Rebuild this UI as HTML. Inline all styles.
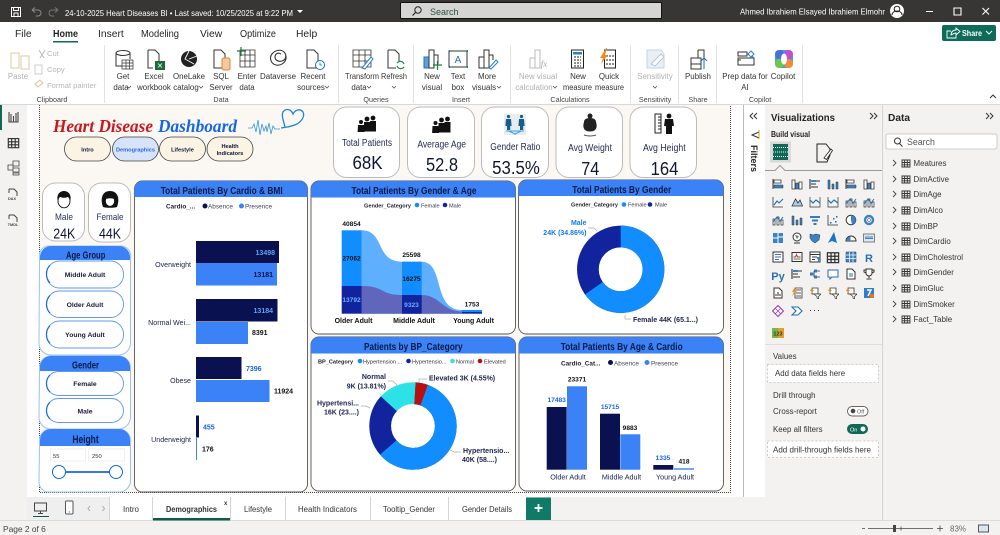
<!DOCTYPE html>
<html><head><meta charset="utf-8"><style>
html,body{margin:0;padding:0;width:1000px;height:535px;overflow:hidden;background:#f3f2f1}
svg{display:block;font-family:"Liberation Sans",sans-serif}
.r{font-size:7.9px;fill:#333;text-anchor:middle}
.d{font-size:7.9px;fill:#b0b0b0;text-anchor:middle}
.g{font-size:7.2px;fill:#444;text-anchor:middle}
.t{font-size:10.3px;fill:#252423}
.h{font-size:10.3px;font-weight:bold;fill:#0a1a45;text-anchor:middle}
.l{font-size:6.4px;fill:#445}
.lb{font-size:6.4px;font-weight:bold;fill:#223}
.a{font-size:7.1px;fill:#1b2350}
.kt{font-size:10px;fill:#252b55;text-anchor:middle}
.kv{font-size:18.5px;fill:#111633;text-anchor:middle}
.s{font-size:6.8px;font-weight:bold;fill:#1a1a3a;text-anchor:middle}
.tb{font-size:8.6px;fill:#333}
.tr{font-size:7.9px;fill:#333}
</style></head><body>
<svg width="1000" height="535" viewBox="0 0 1000 535" xmlns="http://www.w3.org/2000/svg">
<defs>
<symbol id="tbl" viewBox="0 0 10 10"><path d="M1 2h8v7H1zM1 4.500h8M1 6.800h8M3.600 2v7M6.300 2v7" fill="none" stroke="#333" stroke-width=".9"/></symbol>
<symbol id="hb" viewBox="0 0 12 12"><path d="M1 1v10" stroke="#333" fill="none"/><path d="M2 2h7v3H2z" fill="#fff" stroke="#333" stroke-width=".8"/><path d="M2 7h9v3H2z" fill="#3b82c4" stroke="#333" stroke-width=".5"/></symbol>
<symbol id="vb" viewBox="0 0 12 12"><path d="M1 2h3v9H1zM8 4h3v7H8z" fill="#fff" stroke="#333" stroke-width=".8"/><path d="M4.500 5h3v6h-3z" fill="#3b82c4" stroke="#333" stroke-width=".5"/></symbol>
<symbol id="hs" viewBox="0 0 12 12"><path d="M1 1v10M2 3h9M2 6h5M2 9h7" fill="none" stroke="#333" stroke-width="1.100"/><path d="M2 2h5v2H2z" fill="#3b82c4"/></symbol>
<symbol id="vs" viewBox="0 0 12 12"><path d="M1 2v9h2V2zM5 6v5h2V6zM9 4v7h2V4z" fill="#3b82c4" stroke="#333" stroke-width=".5"/></symbol>
<symbol id="ln" viewBox="0 0 12 12"><path d="M1 1v10h10" fill="none" stroke="#333" stroke-width=".8"/><path d="M2 9l3-4 2 2 4-4" fill="none" stroke="#1f6fb5" stroke-width="1.100"/></symbol>
<symbol id="ar" viewBox="0 0 12 12"><path d="M1 10l3.500-7 2.500 4 2-3 2.500 6z" fill="#a9cdee" stroke="#333" stroke-width=".8"/></symbol>
<symbol id="wv" viewBox="0 0 12 12"><path d="M1 1v10h10V1" fill="none" stroke="#333" stroke-width=".7"/><path d="M1 4l3 3 3-3 4 3" fill="none" stroke="#1f6fb5" stroke-width="1.200"/></symbol>
<symbol id="cb" viewBox="0 0 12 12"><path d="M1 5h2v6H1zM5 3h2v8H5zM9 6h2v5H9z" fill="#fff" stroke="#333" stroke-width=".7"/><path d="M1 8l4-5 3 4 3-4" fill="none" stroke="#1f6fb5"/></symbol>
<symbol id="fn" viewBox="0 0 12 12"><path d="M1 2h10v2H1zM3 5.500h6v2H3zM4.500 9h3v2h-3z" fill="#2b7fc4"/></symbol>
<symbol id="sc" viewBox="0 0 12 12"><path d="M1 1v10h10" fill="none" stroke="#333" stroke-width=".8"/><path d="M3 8h1.500v1.500H3zM6 4h1.500v1.500H6zM8 7h1.500v1.500H8zM9 2h1.500v1.500H9z" fill="#1f6fb5"/></symbol>
<symbol id="pi" viewBox="0 0 12 12"><circle cx="6" cy="6" r="4.800" fill="#fff" stroke="#333"/><path d="M6 6V1.200A4.800 4.800 0 0 1 7 10.700z" fill="#3b82c4"/></symbol>
<symbol id="dn" viewBox="0 0 12 12"><circle cx="6" cy="6" r="4" fill="none" stroke="#3b82c4" stroke-width="2.400"/><circle cx="6" cy="6" r="1.500" fill="none" stroke="#333" stroke-width=".5"/></symbol>
<symbol id="tm" viewBox="0 0 12 12"><path d="M1 1h10v10H1z" fill="#3b82c4"/><path d="M6 1v10M6 5h5M1 6h5" stroke="#fff"/></symbol>
<symbol id="gl" viewBox="0 0 12 12"><circle cx="6" cy="5" r="4" fill="#fff" stroke="#333"/><path d="M4 3l4 1-2 3z" fill="#3a9a4a"/><path d="M3 11h6" stroke="#333"/></symbol>
<symbol id="mp" viewBox="0 0 12 12"><path d="M1 2l3 1 3-1 4 1-1 5-4 3-3-2-2-3z" fill="#3b82c4" stroke="#333" stroke-width=".5"/></symbol>
<symbol id="az" viewBox="0 0 12 12"><path d="M7 0L1 11l4-2 5 2z" fill="#1c74c9"/></symbol>
<symbol id="gg" viewBox="0 0 12 12"><path d="M1 9a5 5 0 0 1 10 0z" fill="#fff" stroke="#333"/><path d="M1.500 9a4.500 4.500 0 0 1 4-4.500V9z" fill="#3b82c4"/></symbol>
<symbol id="cd" viewBox="0 0 12 12"><path d="M.5 2h11v8H.5z" fill="#dfe8f2" stroke="#555" stroke-width=".7"/><path d="M2 6.500h8M2 5h8" stroke="#3b82c4" stroke-width="1"/></symbol>
<symbol id="ml" viewBox="0 0 12 12"><path d="M1 1h10v10H1z" fill="#fff" stroke="#333"/><path d="M3 3.500h6M3 6h6M3 8.500h4" stroke="#3b6fa5"/></symbol>
<symbol id="kp" viewBox="0 0 12 12"><path d="M1 1.500h10v9H1z" fill="#f4f4f4" stroke="#333"/><path d="M2.500 6h2l1-2.500 1 2.500h3" stroke="#c33" fill="none"/><path d="M2.500 8h7" stroke="#3a9a4a"/></symbol>
<symbol id="sl" viewBox="0 0 12 12"><path d="M1 1h10v10H1z" fill="#fff" stroke="#333"/><path d="M1 3.500h10M3 6h5M3 8.500h3" stroke="#333"/><path d="M7 6h5l-2 3v3l-1-1V9z" fill="#3b82c4"/></symbol>
<symbol id="mt" viewBox="0 0 12 12"><path d="M1 1h10v10H1z" fill="#3b82c4" stroke="#245" stroke-width=".5"/><path d="M1 4h10M1 7.500h10M4.500 1v10M8 1v10" stroke="#fff" stroke-width=".7"/></symbol>
<symbol id="dc" viewBox="0 0 12 12"><path d="M1 4.500h3v3H1zM5 1.500h3v3H5zM5 7.500h3v3H5z" fill="#2b7fc4"/><path d="M4 6h1M5 3v6M8 3h3M8 9h3" fill="none" stroke="#333" stroke-width=".8"/></symbol>
<symbol id="sp" viewBox="0 0 12 12"><path d="M1 2h10v7H5l-2 2V9H1z" fill="#fff" stroke="#1f6fb5" stroke-width="1"/></symbol>
<symbol id="pg" viewBox="0 0 12 12"><path d="M2 1h5l3 3v7H2z" fill="#fff" stroke="#333"/><path d="M4 6h4M4 8h4" stroke="#1f6fb5"/></symbol>
<symbol id="tp" viewBox="0 0 12 12"><path d="M3 1h6v4a3 3 0 0 1-6 0zM6 8v2M3.500 11h5M3 2H1v2l2 1M9 2h2v2L9 5" fill="#fff" stroke="#333"/></symbol>
<symbol id="pr" viewBox="0 0 12 12"><path d="M2 1h5l3 3v7H2z" fill="#fff" stroke="#333"/><path d="M4 9V7M6 9V5M8 9V7" stroke="#333"/></symbol>
<symbol id="zp" viewBox="0 0 12 12"><path d="M4 1h7v10H4z" fill="#fff" stroke="#333" stroke-width=".8"/><path d="M5 3h5M5 6h5M5 9h5" stroke="#555"/><path d="M4 0L1 5h2L1 9l5-5H4z" fill="#f08c1c"/></symbol>
<symbol id="zf" viewBox="0 0 12 12"><path d="M3 1h6v6H3z" fill="#fff" stroke="#333" stroke-width=".8"/><path d="M3 0L1 4h2L2 7l3-4H3z" fill="#f08c1c"/><path d="M5 7h7L9.500 9.500V12L8 11V9.500z" fill="#fff" stroke="#333" stroke-width=".7"/></symbol>
<symbol id="pw" viewBox="0 0 12 12"><path d="M1 1h10v10H1z" fill="#2d7ec4"/><path d="M4 3h4L5 9" fill="none" stroke="#fff" stroke-width="1.500"/><path d="M7 7h4v4H7z" fill="#e8702a"/></symbol>
<symbol id="ps" viewBox="0 0 12 12"><path d="M6 .500L11.500 6 6 11.500.5 6z" fill="#fff" stroke="#9b3fb5" stroke-width="1.100"/><path d="M3.500 3.500l5 5M8.500 3.500l-5 5" stroke="#9b3fb5" stroke-width=".8"/></symbol>
<symbol id="ch" viewBox="0 0 12 12"><path d="M1 2h6l4 4-4 4H1l4-4z" fill="#fff" stroke="#1f6fb5" stroke-width="1.100"/></symbol>
</defs>

<rect width="1000" height="535" fill="#f3f2f1"/>
<rect width="1000" height="22" fill="#373635"/>
<rect y="22" width="1000" height="83" fill="#fff"/>
<rect y="104" width="1000" height="1" fill="#d8d8d8"/>
<rect x="27" y="105" width="716" height="392" fill="#fff"/>
<rect x="39" y="105" width="692" height="388" fill="#fbf8f3"/>
<path d="M39.500 105V492.500H730.500V105" fill="none" stroke="#444" stroke-width="1" stroke-dasharray="1 1"/>
<rect x="743" y="105" width="1" height="392" fill="#bbb"/>
<rect x="744" y="105" width="21" height="392" fill="#fff"/>
<rect x="882" y="105" width="1" height="415" fill="#d5d5d5"/>
<rect x="0" y="105" width="2" height="25" fill="#0e6a55"/>

<!-- title bar -->
<g fill="none" stroke="#fff" stroke-width="1">
<path d="M11.500 7.500h9v9h-9zM13.500 7.500v3h5v-3M14 16.500v-3.500h4v3.500"/>
<path d="M32 10l3-2.500M32 10l3 2.500M32 10h6a3 3 0 0 1 0 6h-2" stroke="#8a8a8a"/>
<path d="M58 10l-3-2.500M58 10l-3 2.500M58 10h-6a3 3 0 0 0 0 6h2" stroke="#777"/>
</g>
<text x="65" y="16" font-size="8.600" fill="#fff" textLength="228" lengthAdjust="spacingAndGlyphs">24-10-2025 Heart Diseases BI  •  Last saved: 10/25/2025 at 9:22 PM</text>
<path d="M297 10h6l-3 3z" fill="#fff"/>
<rect x="400.500" y="2.500" width="261" height="16" rx="1" fill="#d5d5d2" stroke="#111"/>
<circle cx="418" cy="10" r="3.200" fill="none" stroke="#222"/><path d="M415.500 12.500l-3 3" stroke="#222" stroke-width="1.200"/>
<text x="430" y="15" font-size="9" fill="#2f4f45">Search</text>
<text x="740" y="14.500" font-size="8.200" fill="#fff" textLength="145" lengthAdjust="spacingAndGlyphs">Ahmed Ibrahiem Elsayed Ibrahiem Elmohr</text>
<circle cx="897" cy="11" r="7" fill="#fff"/><circle cx="897" cy="9" r="2.800" fill="none" stroke="#222"/><path d="M892 15a5 4 0 0 1 10 0" fill="none" stroke="#222"/>
<path d="M926 11.500h7M954 8h7v7h-7zM982.500 8l6.500 6.500M989 8l-6.500 6.500" fill="none" stroke="#fff" stroke-width="1.100"/>

<!-- tabs -->
<text x="15" y="37" class="t">File</text>
<text x="53" y="37" class="t" font-weight="bold" textLength="25" lengthAdjust="spacingAndGlyphs">Home</text>
<rect x="53" y="41" width="25" height="1.500" fill="#0e6a55"/>
<text x="98" y="37" class="t">Insert</text>
<text x="141" y="37" class="t" textLength="38" lengthAdjust="spacingAndGlyphs">Modeling</text>
<text x="200" y="37" class="t">View</text>
<text x="240" y="37" class="t" textLength="36" lengthAdjust="spacingAndGlyphs">Optimize</text>
<text x="296" y="37" class="t">Help</text>
<rect x="942" y="25" width="54" height="16" rx="2" fill="#0e6b58"/>
<path d="M951 31h-4v7h9v-3M951 35c0-3 2-5 5-5v-2l4 3.500-4 3.500v-2c-2 0-3 1-5 2z" fill="none" stroke="#fff" stroke-width=".9"/>
<text x="962" y="36" font-size="8.400" fill="#fff" font-weight="bold" textLength="20" lengthAdjust="spacingAndGlyphs">Share</text>
<path d="M986 31l3 3 3-3" fill="none" stroke="#fff"/>

<path d="M104.500 45v58M338.500 45v58M413.500 45v58M510.500 45v58M630.500 45v58M678.500 45v58M716.500 45v58M802.500 45v58" stroke="#e1e1e1"/>
<g>
<text x="18" y="79" class="d">Paste</text>
<text x="47" y="56" font-size="7.600" fill="#b8b8b8">Cut</text>
<text x="47" y="72" font-size="7.600" fill="#b8b8b8">Copy</text>
<text x="47" y="88" font-size="7.600" fill="#b8b8b8">Format painter</text>
<text x="123" y="79" class="r">Get</text><text x="121" y="90" class="r">data</text>
<text x="154" y="79" class="r">Excel</text><text x="154" y="90" class="r">workbook</text>
<text x="189" y="79" class="r">OneLake</text><text x="186" y="90" class="r">catalog</text>
<text x="221" y="79" class="r">SQL</text><text x="221" y="90" class="r">Server</text>
<text x="247" y="79" class="r">Enter</text><text x="247" y="90" class="r">data</text>
<text x="278" y="79" class="r">Dataverse</text>
<text x="313" y="79" class="r">Recent</text><text x="311" y="90" class="r">sources</text>
<text x="362" y="79" class="r" textLength="34" lengthAdjust="spacingAndGlyphs">Transform</text><text x="359" y="90" class="r">data</text>
<text x="394" y="79" class="r" textLength="26" lengthAdjust="spacingAndGlyphs">Refresh</text>
<text x="432" y="79" class="r">New</text><text x="432" y="90" class="r">visual</text>
<text x="458" y="79" class="r">Text</text><text x="458" y="90" class="r">box</text>
<text x="487" y="79" class="r">More</text><text x="484" y="90" class="r">visuals</text>
<text x="538" y="79" class="d">New visual</text><text x="534" y="90" class="d">calculation</text>
<text x="578" y="79" class="r">New</text><text x="577.500" y="90" class="r" textLength="29" lengthAdjust="spacingAndGlyphs">measure</text>
<text x="609" y="79" class="r">Quick</text><text x="609.500" y="90" class="r" textLength="29" lengthAdjust="spacingAndGlyphs">measure</text>
<text x="655" y="79" class="d">Sensitivity</text>
<text x="698" y="79" class="r">Publish</text>
<text x="745" y="79" class="r">Prep data for</text><text x="745" y="90" class="r">AI</text>
<text x="783" y="79" class="r">Copilot</text>
<text x="52" y="102" class="g">Clipboard</text><text x="221" y="102" class="g">Data</text><text x="376" y="102" class="g">Queries</text><text x="461" y="102" class="g">Insert</text><text x="570" y="102" class="g">Calculations</text><text x="655" y="102" class="g">Sensitivity</text><text x="698" y="102" class="g">Share</text><text x="760" y="102" class="g">Copilot</text>
<path d="M127 86l2 2 2-2M199 86l2 2 2-2M325 86l2 2 2-2M367 86l2 2 2-2M392 86l2 2 2-2M497 86l2 2 2-2M553 86l2 2 2-2M653 86l2 2 2-2" fill="none" stroke="#555" stroke-width=".8"/>
</g>
<g fill="none" stroke="#333" stroke-width="1">
<path d="M11 53h8v15H11zM21 56h8v13h-8z" stroke="#e0c9a0"/><path d="M39 50l3 5 3-5M42 55l-2 3M42 55l2 3" stroke="#bbb"/><path d="M35 65h7v9h-7z" stroke="#ccc"/><path d="M35 84l5-4 3 3-5 4z" stroke="#d8c59a"/>
<ellipse cx="123" cy="53" rx="7" ry="2.500"/><path d="M116 53v13h6M130 53v6"/><path d="M122 60h11v9h-11zM122 63h11M122 66h11M126 60v9M129.500 60v9" stroke-width=".7"/>
<path d="M148 50h7l4 4v8M148 50v18h5"/><rect x="155" y="61" width="10" height="9" fill="#1d6b3a" stroke="none"/><path d="M158 63.500l4 4M162 63.500l-4 4" stroke="#fff" stroke-width=".8"/>
<circle cx="189" cy="59" r="8" fill="#222" stroke="none"/><path d="M189 51l-4 8 9 5M189 59l8-3" stroke="#fff" stroke-width=".9"/>
<path d="M214 50h7l4 4v14h-11z"/><rect x="222" y="58" width="8" height="12" rx="2" fill="#f7c9a0" stroke="#d8843a"/>
<path d="M240 50h15v17h-15zM240 55h15M240 61h15M245 50v17M250 50v17" stroke-width=".8"/><path d="M241 47v9M237 51h9" stroke="#1d7a3a" stroke-width="1.200"/>
<path d="M286 56c1 6-5 10-10 9s-7-7-4-11 9-5 12-2 2 8-2 9-7-1-7-4 3-5 6-3" stroke-width="1.100"/>
<path d="M307 50h7l4 4v14h-11z"/><circle cx="320" cy="65" r="4.500" fill="#fff" stroke="#1f6fb5"/><path d="M320 62.500V65h2" stroke="#1f6fb5" stroke-width=".8"/>
<path d="M353 50h18v17h-18zM353 55h18M353 61h18M359 50v17M365 50v17" stroke-width=".8"/><path d="M362 68l9-11 2 2-8 10z" fill="#fff" stroke="#2b7fc4"/>
<path d="M388 50h7l4 4v8M388 50v18h8"/><path d="M397 63a4 4 0 0 1 7 1M404 67a4 4 0 0 1-7-1" stroke="#2b8a4a" stroke-width="1.200"/>
<path d="M424 57h5v11h-5z" fill="#5aa0de" stroke="#2b6fb0"/><path d="M429 50h5v18h-5zM434 55h4v9"/><path d="M433 65h9M437.500 61v9" stroke="#1d7a3a" stroke-width="1.200"/>
<path d="M449 51h18v16h-18z" stroke="#333"/><path d="M449 51h1M467 51h1M449 67h1M467 67h1" stroke="#1f6fb5" stroke-width="2"/><text x="458" y="63" font-size="10" fill="#2b6fb0" stroke="none" text-anchor="middle">A</text>
<path d="M479 57h5v11h-5zM484 50h5v18h-5zM489 55h4v5"/><path d="M489 68l7-8 2 2-7 7z" fill="#fff" stroke="#2b7fc4"/>
<path d="M530 58h5v10h-5zM535 50h5v18h-5z" stroke="#bbb"/><text x="544" y="67" font-size="9" font-family="Liberation Serif" font-style="italic" fill="#aaa" stroke="none" text-anchor="middle">fx</text>
<rect x="571.500" y="50" width="12" height="18" stroke="#222"/><rect x="573" y="52" width="9" height="2.500" fill="#2b7fc4" stroke="none"/><path d="M574 57h2M577 57h2M580 57h1M574 60h2M577 60h2M580 60h1M574 63h2M577 63h2M580 63h1M574 66h2M577 66h2M580 66h1" stroke="#222"/>
<rect x="604.500" y="50" width="11" height="18" stroke="#222"/><path d="M606 56h2M609 56h2M612 56h2M606 60h2M609 60h2M612 60h2M606 64h2M609 64h2M612 64h2" stroke="#222"/><path d="M606 48l-6 10h3l-2 6 7-9h-3l2-7z" fill="#f08c1c" stroke="none"/>
<path d="M647 50h14l3 4v14h-17z" fill="#e8f0f6" stroke="#c5d6e2"/><path d="M651 64l10-10 3 3-9 9z" fill="#fff" stroke="#b5c8d8"/>
<path d="M698 50h6v12M698 50v8M691 58h10v11h-10zM691 64h10"/><path d="M704 69V58M701 61l3-3 3 3" stroke="#1f6fb5"/>
<path d="M738 58h16v7h-16zM738 60h3"/><path d="M738 52h9v4h-9z"/><path d="M751 51l3 3-3 3-3-3zM752 56l2 2" stroke="#2b7fc4"/>
</g>
<rect x="775" y="50" width="18" height="18" rx="6" fill="#2fa5d8"/><rect x="775" y="50" width="9" height="9" rx="4" fill="#4c6fe0"/><rect x="784" y="50" width="9" height="9" rx="4" fill="#c24fd0"/><rect x="775" y="59" width="9" height="9" rx="4" fill="#6fc84a"/><rect x="784" y="59" width="9" height="9" rx="4" fill="#f08c3c"/><ellipse cx="784" cy="59" rx="3" ry="5.500" fill="#fff"/>
<path d="M990 98l3-3 3 3" fill="none" stroke="#333"/>
<g fill="none" stroke="#444">
<path d="M9 112v10h9v-10M11 122v-8M13.500 122v-6M16 122v-9" stroke-width="1.100"/>
<use href="#tbl" x="7" y="136" width="13" height="13"/>
<path d="M8 165h5v5H8zM13 161h6v5h-6zM13 168h6v4h-6zM13 173h6v2h-6z" stroke-width=".8"/>
<path d="M9 189h5l3 3v4M9 189v4"/><path d="M9 215h5l3 3v4M9 215v4"/>
</g>
<text x="12" y="200" font-size="3.800" font-weight="bold" fill="#444" text-anchor="middle">DAX</text>
<text x="13" y="226" font-size="3.800" font-weight="bold" fill="#444" text-anchor="middle">TMDL</text>

<!-- dashboard title -->
<text x="53" y="132" font-family="Liberation Serif" font-weight="bold" font-style="italic" font-size="17.500" fill="#c8171e" textLength="100" lengthAdjust="spacingAndGlyphs">Heart Disease</text>
<text x="158" y="132" font-family="Liberation Serif" font-weight="bold" font-style="italic" font-size="17.500" fill="#1666e8" textLength="79" lengthAdjust="spacingAndGlyphs">Dashboard</text>
<path d="M248 128h4l2-4 2 8 2-12 2 15 2-11 2 7 2-5 1 6 2-9 2 11 2-8 2 3h5" fill="none" stroke="#3596d8" stroke-width=".8"/>
<path d="M285 128C284 121 281 116 283 112C286 108 291 109 293 114C295 110 300 108 303 112C305 116 302 121 297 124C293 126 289 127 281 128" fill="none" stroke="#1c86d8" stroke-width="1.300"/>
<g stroke="#444" stroke-width=".8" fill="#fbf3e4">
<rect x="64.500" y="137" width="46" height="24" rx="12"/>
<rect x="112.500" y="137" width="46" height="24" rx="12" fill="#d6e3f8"/>
<rect x="159.500" y="137" width="46" height="24" rx="12"/>
<rect x="207" y="137" width="46" height="24" rx="12"/>
</g>
<g font-size="5.600" font-weight="bold" fill="#11163a" text-anchor="middle">
<text x="87.500" y="151.500">Intro</text><text x="135.500" y="151.500" fill="#2a66e0" textLength="39" lengthAdjust="spacingAndGlyphs">Demographics</text><text x="182.500" y="151.500">Lifestyle</text><text x="230" y="148">Health</text><text x="230" y="155">Indicators</text>
</g>

<!-- KPI cards -->
<g fill="#fff" stroke="#bbb">
<rect x="333.500" y="107" width="66" height="70.500" rx="13"/><rect x="407.500" y="107" width="67" height="70.500" rx="13"/><rect x="481.500" y="107" width="67" height="70.500" rx="13"/><rect x="556" y="107" width="66.500" height="70.500" rx="13"/><rect x="630" y="107" width="66.500" height="70.500" rx="13"/>
<rect x="42.500" y="183" width="42" height="58" rx="13"/><rect x="88.500" y="183" width="42" height="59" rx="13"/>
</g>
<g fill="#111">
<g id="fam"><circle cx="361" cy="122" r="2"/><circle cx="367" cy="119" r="2.400"/><circle cx="373" cy="118" r="2.400"/><path d="M358 125h6l.6 7h-7zM364 122h6v9.500h-6zM370 121h6v10.500h-6z"/></g>
<use href="#fam" x="74.500" y="1"/>
</g>
<rect x="504" y="114" width="22" height="21" fill="#e9ecef"/>
<g fill="#155e8c"><circle cx="508.500" cy="116.500" r="1.600"/><circle cx="521.500" cy="116.500" r="1.600"/><path d="M506 119h5l.6 7h-1.400v4h-3.200v-4h-1.600zM519 119h5l.6 7h-1.400v4h-3.200v-4h-1.600z"/></g>
<path d="M506 131h18M509 131l6 3 6-3M515 134v1" stroke="#3aa0dc" fill="none"/>
<circle cx="590" cy="116" r="2.500" fill="#222"/><path d="M584 122c0-3 3-4 6-4s6 1 6 4c1 3 1 6-1 8-2 2-8 2-10 0-2-2-2-5-1-8z" fill="#222"/><path d="M584 135q6 2 12 0" stroke="#555" fill="none"/>
<path d="M655 114h6v19h-6zM658 117h3M658 120h3M658 123h3M658 126h3M658 129h3" fill="none" stroke="#222"/><circle cx="669" cy="116" r="2.400" fill="#111"/><path d="M665 119h8l1 7h-2v8h-6v-8h-2z" fill="#111"/>
<text x="367" y="146" class="kt" textLength="50" lengthAdjust="spacingAndGlyphs">Total Patients</text><text x="367.500" y="169" class="kv" textLength="30" lengthAdjust="spacingAndGlyphs">68K</text>
<text x="441.700" y="147.500" class="kt" textLength="48.700" lengthAdjust="spacingAndGlyphs">Average Age</text><text x="442" y="171" class="kv" textLength="32" lengthAdjust="spacingAndGlyphs">52.8</text>
<text x="515.300" y="150" class="kt" textLength="50" lengthAdjust="spacingAndGlyphs">Gender Ratio</text><text x="516" y="174" class="kv" textLength="47.700" lengthAdjust="spacingAndGlyphs">53.5%</text>
<text x="590" y="151" class="kt" textLength="44" lengthAdjust="spacingAndGlyphs">Avg Weight</text><text x="590.300" y="175" class="kv" textLength="18" lengthAdjust="spacingAndGlyphs">74</text>
<text x="664.300" y="151" class="kt" textLength="42.700" lengthAdjust="spacingAndGlyphs">Avg Height</text><text x="664.500" y="175" class="kv" textLength="27.700" lengthAdjust="spacingAndGlyphs">164</text>

<!-- male/female -->
<ellipse cx="64" cy="201" rx="6" ry="6.800" fill="#fff" stroke="#111" stroke-width=".9"/><path d="M57.500 200c-2-12 15-12 13 0-1-2-2-3-3-3-2 1-5 1-7 0-1 0-2 1-3 3z" fill="#111"/>
<path d="M103 207c-3-8-1-16 7-16s10 8 7 16c-3 1-11 1-14 0z" fill="#111"/><ellipse cx="110" cy="201" rx="4.200" ry="5" fill="#fff"/><path d="M105.500 199c1-4 8-4 9 0-3-1-6-1-9 0z" fill="#111"/>
<text x="64" y="220" font-size="9.500" fill="#2a2f5f" text-anchor="middle" textLength="18" lengthAdjust="spacingAndGlyphs">Male</text><text x="64.300" y="238.500" font-size="14.500" fill="#111633" text-anchor="middle" textLength="22" lengthAdjust="spacingAndGlyphs">24K</text>
<text x="110" y="220" font-size="9.500" fill="#2a2f5f" text-anchor="middle" textLength="27" lengthAdjust="spacingAndGlyphs">Female</text><text x="110" y="238.500" font-size="14.500" fill="#111633" text-anchor="middle" textLength="22" lengthAdjust="spacingAndGlyphs">44K</text>

<!-- slicers -->
<g fill="#fff" stroke="#9cc0f6">
<path d="M39.500 258a10 10 0 0 1 8-12h74a10 10 0 0 1 9 12v85a12 12 0 0 1-12 12H51a12 12 0 0 1-12-12z"/>
<path d="M39.500 369a12 12 0 0 1 10-13h70a12 12 0 0 1 11 13v48a12 12 0 0 1-12 12H51a12 12 0 0 1-12-12z"/>
<path d="M39.500 443a12 12 0 0 1 10-14h70a12 12 0 0 1 11 14v39a12 12 0 0 1-10 10H49a10 10 0 0 1-10-10z"/>
</g>
<path d="M40 260v-3a11 11 0 0 1 11-11h68a11 11 0 0 1 11 11v3z" fill="#3b82f6"/>
<path d="M40 371v-4a11 11 0 0 1 11-11h68a11 11 0 0 1 11 11v4z" fill="#3b82f6"/>
<path d="M40 446v-6a11 11 0 0 1 11-11h68a11 11 0 0 1 11 11v6z" fill="#3b82f6"/>
<text x="85.700" y="258.500" class="h" textLength="39.300" lengthAdjust="spacingAndGlyphs">Age Group</text><text x="85.500" y="368.500" class="h" textLength="27" lengthAdjust="spacingAndGlyphs">Gender</text><text x="85.500" y="443" font-size="11" font-weight="bold" fill="#0a1a45" text-anchor="middle" textLength="26.300" lengthAdjust="spacingAndGlyphs">Height</text>
<g fill="#fff" stroke="#5f97f5" stroke-width=".9">
<rect x="46.500" y="261" width="77" height="27" rx="13"/><rect x="46.500" y="291" width="77" height="26.500" rx="13"/><rect x="46.500" y="321" width="77" height="27" rx="13"/><rect x="46.500" y="371.500" width="77" height="24" rx="12"/><rect x="46.500" y="398.500" width="77" height="24" rx="12"/>
</g>
<path d="M50 265.100A13 13 0 0 0 50 282.900M50 295.400A13 13 0 0 0 50 313.100M50 325.600A13 13 0 0 0 50 343.400M50 375A12 12 0 0 0 50 392M50 402A12 12 0 0 0 50 419" fill="none" stroke="#1666e8" stroke-width="1.200"/>
<text x="85" y="277" class="s">Middle Adult</text><text x="85" y="307" class="s">Older Adult</text><text x="85" y="337" class="s">Young Adult</text><text x="85" y="386" class="s">Female</text><text x="85" y="413.500" class="s">Male</text>
<rect x="50.500" y="449" width="35" height="12" fill="#fff" stroke="#eee"/><rect x="88.500" y="449" width="36" height="12" fill="#fff" stroke="#eee"/>
<text x="53" y="458" font-size="5.800" fill="#333">55</text><text x="92" y="458" font-size="5.800" fill="#333">250</text>
<path d="M65 472h45" stroke="#1666e8" stroke-width="1.800"/>
<circle cx="59" cy="472" r="6.500" fill="#fff" stroke="#1666e8"/><circle cx="116" cy="472" r="6.500" fill="#fff" stroke="#1666e8"/>

<!-- chart cards -->
<g fill="#fff" stroke="#555" stroke-width=".9">
<rect x="134.500" y="181" width="173" height="311" rx="8"/>
<rect x="311" y="181" width="204.500" height="153" rx="8"/>
<rect x="518.500" y="180" width="205" height="154" rx="8"/>
<rect x="311" y="337" width="204.500" height="154" rx="8"/>
<rect x="519" y="337" width="204.500" height="154" rx="8"/>
</g>
<g fill="#3b82f6">
<path d="M134.500 197v-8a8 8 0 0 1 8-8h157a8 8 0 0 1 8 8v8z"/>
<path d="M311 197.500V189a8 8 0 0 1 8-8h188.500a8 8 0 0 1 8 8v8.500z"/>
<path d="M518.500 196v-8a8 8 0 0 1 8-8h189a8 8 0 0 1 8 8v8z"/>
<path d="M311 353.500V345a8 8 0 0 1 8-8h188.500a8 8 0 0 1 8 8v8.500z"/>
<path d="M519 353.500V345a8 8 0 0 1 8-8h188.500a8 8 0 0 1 8 8v8.500z"/>
</g>
<text x="221.700" y="194" class="h" textLength="122" lengthAdjust="spacingAndGlyphs">Total Patients By Cardio &amp; BMI</text>
<text x="414" y="194" class="h" textLength="125" lengthAdjust="spacingAndGlyphs">Total Patients By Gender &amp; Age</text>
<text x="621.800" y="193" class="h" textLength="99" lengthAdjust="spacingAndGlyphs">Total Patients By Gender</text>
<text x="413.300" y="350" class="h" textLength="98.700" lengthAdjust="spacingAndGlyphs">Patients by BP_Category</text>
<text x="621.700" y="350" class="h" textLength="122" lengthAdjust="spacingAndGlyphs">Total Patients By Age &amp; Cardio</text>

<!-- chart 1 -->
<text x="166" y="208.500" class="lb">Cardio_...</text><circle cx="205" cy="206" r="2.500" fill="#0a1150"/><text x="208" y="208.500" class="l">Absence</text><circle cx="241.500" cy="206" r="2.500" fill="#3b82f6"/><text x="245" y="208.500" class="l">Presence</text>
<g fill="#0a1150"><rect x="196" y="241" width="83" height="22"/><rect x="196" y="299" width="81.500" height="22.500"/><rect x="196" y="357" width="45.500" height="22"/><rect x="196" y="415.500" width="3" height="22"/></g>
<g fill="#3b82f6"><rect x="196" y="263" width="81" height="22.500"/><rect x="196" y="322" width="52" height="22"/><rect x="196" y="380" width="73.500" height="22"/><rect x="196" y="438" width="1" height="22"/></g>
<g text-anchor="end"><text x="191" y="267" class="a">Overweight</text><text x="191" y="325" class="a">Normal Wei...</text><text x="191" y="383" class="a">Obese</text><text x="191" y="442" class="a">Underweight</text></g>
<g font-size="7" font-weight="bold">
<text x="275" y="255" fill="#62a0f8" text-anchor="end">13498</text><text x="273" y="277" fill="#0a1150" text-anchor="end">13181</text><text x="273" y="313" fill="#62a0f8" text-anchor="end">13184</text><text x="252" y="335" fill="#111">8391</text><text x="246" y="371" fill="#1666e8">7396</text><text x="274" y="393.500" fill="#111">11924</text><text x="203" y="429.500" fill="#1666e8">455</text><text x="202" y="451.500" fill="#111">176</text>
</g>

<!-- chart 2 ribbon -->
<text x="364" y="207.500" font-size="5.600" font-weight="bold" fill="#223">Gender_Category</text><circle cx="417" cy="205" r="2.300" fill="#118dff"/><text x="421" y="207.500" font-size="5.600" fill="#334">Female</text><circle cx="445" cy="205" r="2.300" fill="#12239e"/><text x="449" y="207.500" font-size="5.600" fill="#334">Male</text>
<path d="M361.700 230.300C385 230.300 375 261.700 402 261.700H421.700C445 261.700 432 310 462 310V313.700H361.700z" fill="#5eb0ff"/>
<path d="M361.700 286C385 286 380 295 402 295H421.700C440 295 442 311.500 462 311.500V313.700H361.700z" fill="#5f66bb"/>
<rect x="341.700" y="230.300" width="20" height="55.700" fill="#118dff"/><rect x="341.700" y="286" width="20" height="27.700" fill="#12239e"/>
<rect x="402" y="261.700" width="19.700" height="33.300" fill="#118dff"/><rect x="402" y="295" width="19.700" height="18.700" fill="#12239e"/>
<rect x="462" y="310" width="20" height="2" fill="#118dff"/><rect x="462" y="312" width="20" height="1.700" fill="#12239e"/>
<g font-size="6.600" font-weight="bold" text-anchor="middle"><text x="351.500" y="226" fill="#111">40854</text><text x="351.500" y="260.500" fill="#111">27062</text><text x="351.500" y="302" fill="#6ab0ff">13792</text><text x="411.500" y="257" fill="#111">25598</text><text x="411.500" y="281" fill="#111">16275</text><text x="411.500" y="307" fill="#6ab0ff">9323</text><text x="472" y="306.500" fill="#111">1753</text></g>
<g font-size="7" font-weight="bold" fill="#111" text-anchor="middle"><text x="353.500" y="323">Older Adult</text><text x="414" y="323">Middle Adult</text><text x="473.500" y="323">Young Adult</text></g>

<!-- chart 3 donut -->
<text x="571" y="206.500" font-size="5.600" font-weight="bold" fill="#223">Gender_Category</text><circle cx="624" cy="204.500" r="2.300" fill="#118dff"/><text x="628" y="206.500" font-size="5.600" fill="#334">Female</text><circle cx="650" cy="204.500" r="2.300" fill="#12239e"/><text x="655" y="206.500" font-size="5.600" fill="#334">Male</text>
<g transform="rotate(-90 620.700 269.300)" fill="none" stroke-width="21.700">
<circle cx="620.700" cy="269.300" r="32.800" stroke="#12239e"/>
<circle cx="620.700" cy="269.300" r="32.800" stroke="#118dff" stroke-dasharray="134.200 206.100"/>
</g>
<text x="586.500" y="225" font-size="7" font-weight="bold" fill="#1678f0" text-anchor="end">Male</text><text x="586.500" y="235" font-size="7" font-weight="bold" fill="#1678f0" text-anchor="end">24K (34.86%)</text>
<path d="M588 228h6l3 3M625 315v4h6" fill="none" stroke="#aaa" stroke-width=".7"/>
<text x="633" y="322" font-size="7" font-weight="bold" fill="#1b2350">Female 44K (65.1...)</text>

<!-- chart 4 donut -->
<g font-size="5.600"><text x="318" y="363.500" font-weight="bold" fill="#223">BP_Category</text><circle cx="360" cy="361" r="2.300" fill="#118dff"/><text x="363" y="363.500" fill="#334">Hypertension ...</text><circle cx="408.500" cy="361" r="2.300" fill="#12239e"/><text x="412" y="363.500" fill="#334">Hypertensio...</text><circle cx="452.500" cy="361" r="2.300" fill="#2de2e6"/><text x="456" y="363.500" fill="#334">Normal</text><circle cx="480" cy="361" r="2.300" fill="#b80f0f"/><text x="484" y="363.500" fill="#334">Elevated</text></g>
<g transform="rotate(-86.500 413 426)" fill="none" stroke-width="21.700">
<circle cx="413" cy="426" r="32.800" stroke="#2de2e6"/>
<circle cx="413" cy="426" r="32.800" stroke="#12239e" stroke-dasharray="176.700 206.100"/>
<circle cx="413" cy="426" r="32.800" stroke="#118dff" stroke-dasharray="128.900 206.100"/>
<circle cx="413" cy="426" r="32.800" stroke="#b80f0f" stroke-dasharray="9.400 206.100"/>
</g>
<g font-size="7" font-weight="bold" fill="#1b2350">
<text x="386" y="379" text-anchor="end">Normal</text><text x="386" y="388.500" text-anchor="end">9K (13.81%)</text>
<text x="429" y="380.500">Elevated 3K (4.55%)</text>
<text x="359" y="405.500" text-anchor="end">Hypertensi...</text><text x="359" y="414.500" text-anchor="end">16K (23....)</text>
<text x="463" y="453">Hypertensio...</text><text x="462" y="462">40K (58....)</text>
</g>
<path d="M388 381h5l4 4M361 406h5l4 2M419 383v-4h8M450 450l4 2h7" fill="none" stroke="#aaa" stroke-width=".7"/>

<!-- chart 5 -->
<text x="561" y="365.500" font-size="6.400" font-weight="bold" fill="#223">Cardio_Cat...</text><circle cx="610.500" cy="362.500" r="2.500" fill="#0a1150"/><text x="614" y="365.500" class="l">Absence</text><circle cx="647" cy="362.500" r="2.500" fill="#3b82f6"/><text x="651" y="365.500" class="l">Presence</text>
<g fill="#0a1150"><rect x="546.700" y="407" width="20" height="62.700"/><rect x="600" y="413.700" width="20" height="56"/><rect x="653.300" y="465" width="20" height="4.700"/></g>
<g fill="#3b82f6"><rect x="567" y="386.300" width="20" height="83.400"/><rect x="620.300" y="434.300" width="20" height="35.400"/><rect x="674" y="468.300" width="20" height="1.400"/></g>
<g font-size="6.600" font-weight="bold" text-anchor="middle"><text x="556.700" y="402" fill="#1666e8">17483</text><text x="577" y="381.500" fill="#111">23371</text><text x="610" y="409" fill="#1666e8">15715</text><text x="630" y="430" fill="#111">9883</text><text x="663" y="460" fill="#1666e8">1335</text><text x="684" y="463.500" fill="#111">418</text></g>
<g font-size="7.200" fill="#1b2350" text-anchor="middle"><text x="568" y="479.500">Older Adult</text><text x="621.500" y="479.500">Middle Adult</text><text x="675" y="479.500">Young Adult</text></g>

<!-- tabs bar -->
<rect x="27" y="497" width="83" height="23" fill="#efefef"/>
<rect x="110" y="497" width="416" height="23" fill="#fff"/>
<rect x="551" y="497" width="331" height="23" fill="#f3f2f1"/>
<rect x="0" y="520" width="1000" height="1" fill="#dcdcdc"/>
<path d="M109.500 497v23M152.500 497v23M230.500 497v23M285.500 497v23M370.500 497v23M448.500 497v23" stroke="#d5d5d5"/>
<rect x="153" y="518" width="77" height="2.500" fill="#0e5c48"/>
<path d="M34.500 503h12v8h-12zM38 513.500h5M40.500 511v2" fill="none" stroke="#444"/><rect x="33" y="516" width="16" height="1" fill="#0e5c48"/>
<rect x="65.500" y="501" width="7.500" height="13" rx="1" fill="#fff" stroke="#555"/><circle cx="69.300" cy="512" r=".6" fill="#1666e8"/>
<path d="M90 506l-2 2.500 2 2.500M102.500 506l2 2.500-2 2.500" fill="none" stroke="#aaa"/>
<text x="123" y="512" class="tb" textLength="16" lengthAdjust="spacingAndGlyphs">Intro</text>
<text x="166" y="512" class="tb" font-weight="bold" textLength="51" lengthAdjust="spacingAndGlyphs" fill="#222">Demographics</text>
<text x="224" y="505" font-size="6" font-weight="bold" fill="#333">x</text>
<text x="244" y="512" class="tb" textLength="28" lengthAdjust="spacingAndGlyphs">Lifestyle</text>
<text x="298" y="512" class="tb" textLength="59" lengthAdjust="spacingAndGlyphs">Health Indicators</text>
<text x="383" y="512" class="tb" textLength="52" lengthAdjust="spacingAndGlyphs">Tooltip_Gender</text>
<text x="462" y="512" class="tb" textLength="50" lengthAdjust="spacingAndGlyphs">Gender Details</text>
<rect x="526" y="497.500" width="25" height="22.500" fill="#0f7b66"/>
<path d="M538.500 504v8M534.500 508h8" stroke="#fff" stroke-width="1.800"/>
<text x="3" y="532" font-size="8.400" fill="#444">Page 2 of 6</text>
<path d="M862 528.500h3M868 528.500h65M937 528.500h6M940 525.500v6M901 526.500v4" stroke="#444" fill="none" stroke-width=".8"/>
<rect x="893" y="525" width="3" height="7" fill="#444"/>
<text x="950" y="531.500" font-size="8" fill="#666">83%</text>
<rect x="978.500" y="525" width="10" height="7" fill="#dbe6f2" stroke="#555"/>

<!-- filters pane -->
<path d="M757 113l-3 3 3 3M753 113l-3 3 3 3" fill="none" stroke="#333"/>
<path d="M752 135l7-3v6z" fill="none" stroke="#333"/><path d="M759 130v9" stroke="#e09a1c"/>
<text x="0" y="0" font-size="9" font-weight="bold" fill="#252423" transform="translate(751 145) rotate(90)" textLength="27" lengthAdjust="spacingAndGlyphs">Filters</text>

<!-- viz pane -->
<text x="771" y="121" font-size="10.400" font-weight="bold" fill="#252423" textLength="64" lengthAdjust="spacingAndGlyphs">Visualizations</text>
<path d="M870 113l3 3-3 3M874 113l3 3-3 3M986 113l3 3-3 3M990 113l3 3-3 3" fill="none" stroke="#333" stroke-width="1"/>
<text x="888" y="121" font-size="10.400" font-weight="bold" fill="#252423" textLength="22" lengthAdjust="spacingAndGlyphs">Data</text>
<text x="771" y="137" font-size="8" font-weight="bold" fill="#252423" textLength="39" lengthAdjust="spacingAndGlyphs">Build visual</text>
<rect x="770" y="141.500" width="21" height="21" fill="#d8d8d8"/>
<rect x="773" y="144" width="15" height="16" fill="#0e6a55"/><path d="M773 147.500h15M773 152h15M773 156.500h15" stroke="#fff" stroke-dasharray="1 1"/>
<path d="M817 144h9l4 5v6l-3 7h-10z" fill="none" stroke="#222"/><path d="M824 158l7-9 1.500 1.500-6 9z" fill="#fff" stroke="#222" stroke-width=".8"/>
<path d="M765 170.500h10l5-5 5 5h97" fill="none" stroke="#999"/>
<use href="#hb" x="772" y="178" width="12" height="12"/><use href="#vb" x="791" y="178" width="12" height="12"/><use href="#hs" x="809" y="178" width="12" height="12"/><use href="#vs" x="827" y="178" width="12" height="12"/><use href="#hb" x="845" y="178" width="12" height="12"/><use href="#vb" x="863" y="178" width="12" height="12"/>
<use href="#ln" x="772" y="196" width="12" height="12"/><use href="#ar" x="791" y="196" width="12" height="12"/><use href="#wv" x="809" y="196" width="12" height="12"/><use href="#wv" x="827" y="196" width="12" height="12"/><use href="#cb" x="845" y="196" width="12" height="12"/><use href="#cb" x="863" y="196" width="12" height="12"/>
<use href="#cb" x="772" y="214" width="12" height="12"/><use href="#vs" x="791" y="214" width="12" height="12"/><use href="#fn" x="809" y="214" width="12" height="12"/><use href="#sc" x="827" y="214" width="12" height="12"/><use href="#pi" x="845" y="214" width="12" height="12"/><use href="#dn" x="863" y="214" width="12" height="12"/>
<use href="#tm" x="772" y="232" width="12" height="12"/><use href="#gl" x="791" y="232" width="12" height="12"/><use href="#mp" x="809" y="232" width="12" height="12"/><use href="#az" x="827" y="232" width="12" height="12"/><use href="#gg" x="845" y="232" width="12" height="12"/><use href="#cd" x="863" y="232" width="12" height="12"/>
<use href="#ml" x="772" y="251" width="12" height="12"/><use href="#kp" x="791" y="251" width="12" height="12"/><use href="#sl" x="809" y="251" width="12" height="12"/><use href="#tbl" x="826" y="250" width="14" height="14"/><use href="#mt" x="845" y="251" width="12" height="12"/>
<text x="869" y="262" font-size="11" font-weight="bold" fill="#2b6fb0" text-anchor="middle">R</text>
<text x="778" y="280" font-size="11" font-weight="bold" fill="#2b6fb0" text-anchor="middle">Py</text><use href="#hs" x="791" y="268" width="12" height="12"/><use href="#dc" x="809" y="268" width="12" height="12"/><use href="#sp" x="827" y="268" width="12" height="12"/><use href="#pg" x="845" y="268" width="12" height="12"/><use href="#tp" x="863" y="268" width="12" height="12"/>
<use href="#pr" x="772" y="287" width="12" height="12"/><use href="#zp" x="791" y="287" width="12" height="12"/><use href="#zf" x="809" y="287" width="12" height="12"/><use href="#zf" x="827" y="287" width="12" height="12"/><use href="#zf" x="845" y="287" width="12" height="12"/><use href="#pw" x="863" y="287" width="12" height="12"/>
<use href="#ps" x="772" y="305" width="12" height="12"/><use href="#ch" x="791" y="305" width="12" height="12"/>
<path d="M810 310.500h1M814 310.500h1M818 310.500h1" stroke="#333"/>
<rect x="772" y="328" width="12" height="10" fill="#7cb342"/><rect x="778" y="328" width="6" height="10" fill="#e0a030"/><text x="778" y="335.500" font-size="5.500" font-weight="bold" fill="#333" text-anchor="middle">123</text>
<path d="M765 344.500h117" stroke="#ddd"/>
<text x="773" y="359" class="tr">Values</text>
<rect x="767.500" y="364.500" width="111" height="18" fill="#fff" stroke="#ccc" stroke-dasharray="2 2"/>
<text x="775" y="376" class="tr">Add data fields here</text>
<text x="773" y="398" class="tr">Drill through</text>
<text x="773" y="414" class="tr">Cross-report</text>
<rect x="847.500" y="406.500" width="20.500" height="9.500" rx="4.700" fill="#fff" stroke="#666"/><circle cx="853" cy="411" r="2.300" fill="#444"/><text x="857" y="413.500" font-size="5.500" fill="#555">Off</text>
<text x="773" y="432" class="tr">Keep all filters</text>
<rect x="847" y="424" width="21" height="10" rx="5" fill="#0e6a55"/><circle cx="863" cy="429" r="2.500" fill="#fff"/><text x="850" y="431.500" font-size="5.500" fill="#fff">On</text>
<rect x="767.500" y="441" width="111" height="16.500" fill="#fff" stroke="#ccc" stroke-dasharray="2 2"/>
<text x="773" y="452.500" class="tr" textLength="98" lengthAdjust="spacingAndGlyphs">Add drill-through fields here</text>

<!-- data pane -->
<rect x="886" y="134" width="111" height="15" rx="2" fill="#fff" stroke="#ccc"/>
<circle cx="897.500" cy="141" r="3" fill="none" stroke="#333"/><path d="M899.500 143.500l3 3" stroke="#333"/>
<text x="907" y="145" font-size="8.800" fill="#555">Search</text>
<path d="M893 160l3 3-3 3M893 176l3 3-3 3M893 191l3 3-3 3M893 207l3 3-3 3M893 223l3 3-3 3M893 238l3 3-3 3M893 254l3 3-3 3M893 269l3 3-3 3M893 285l3 3-3 3M893 301l3 3-3 3M893 316l3 3-3 3" fill="none" stroke="#444" stroke-width=".9"/>
<use href="#tbl" x="901" y="158" width="10" height="10"/><use href="#tbl" x="901" y="174" width="10" height="10"/><use href="#tbl" x="901" y="189" width="10" height="10"/><use href="#tbl" x="901" y="205" width="10" height="10"/><use href="#tbl" x="901" y="221" width="10" height="10"/><use href="#tbl" x="901" y="236" width="10" height="10"/><use href="#tbl" x="901" y="252" width="10" height="10"/><use href="#tbl" x="901" y="267" width="10" height="10"/><use href="#tbl" x="901" y="283" width="10" height="10"/><use href="#tbl" x="901" y="299" width="10" height="10"/><use href="#tbl" x="901" y="314" width="10" height="10"/>
<text x="913.500" y="166" class="tr">Meatures</text><text x="913.500" y="182" class="tr">DimActive</text><text x="913.500" y="197" class="tr">DimAge</text><text x="913.500" y="213" class="tr">DimAlco</text><text x="913.500" y="229" class="tr">DimBP</text><text x="913.500" y="244" class="tr">DimCardio</text><text x="913.500" y="260" class="tr">DimCholestrol</text><text x="913.500" y="275" class="tr">DimGender</text><text x="913.500" y="291" class="tr">DimGluc</text><text x="913.500" y="307" class="tr">DimSmoker</text><text x="913.500" y="322" class="tr">Fact_Table</text>
</svg>
</body></html>
